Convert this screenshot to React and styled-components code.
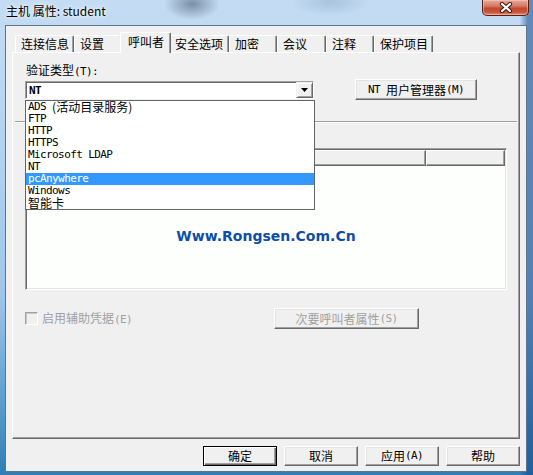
import React from "react";
import styled, { createGlobalStyle } from "styled-components";

const GlobalStyle = createGlobalStyle`
  html, body {
    margin: 0;
    padding: 0;
  }
  body {
    font-family: "Noto Sans CJK SC", sans-serif;
    font-size: 12px;
    color: #000;
  }
`;

const tabs = [
  { label: "连接信息", width: 59 },
  { label: "设置", width: 48 },
  { label: "呼叫者", width: 47, active: true },
  { label: "安全选项", width: 60 },
  { label: "加密", width: 48 },
  { label: "会议", width: 49 },
  { label: "注释", width: 48 },
  { label: "保护项目", width: 59 },
];

const options = [
  { text: "ADS ", cjk: "(活动目录服务)" },
  { text: "FTP" },
  { text: "HTTP" },
  { text: "HTTPS" },
  { text: "Microsoft LDAP" },
  { text: "NT" },
  { text: "pcAnywhere", selected: true },
  { text: "Windows" },
  { cjk: "智能卡" },
];

function App() {
  return (
    <Frame>
      <GlobalStyle />
      <TitleBar>
        <Title>主机 属性: student</Title>
        <CloseButton>
          <svg width="16" height="11" viewBox="0 0 16 11">
            <path d="M4 2 L12 9 M12 2 L4 9" stroke="#3b1a14" strokeWidth="4.2" strokeLinecap="round" />
            <path d="M4 2 L12 9 M12 2 L4 9" stroke="#fff" strokeWidth="2.2" strokeLinecap="round" />
          </svg>
        </CloseButton>
      </TitleBar>

      <Client>
        <TabStrip>
          {tabs.map((t) => (
            <Tab key={t.label} $w={t.width} $active={t.active}>
              {t.label}
            </Tab>
          ))}
        </TabStrip>

        <Panel>
          <FieldLabel>
            验证类型<Ascii>(T):</Ascii>
          </FieldLabel>

          <ComboRow>
            <Combo>
              <ComboText>
                <Ascii>NT</Ascii>
              </ComboText>
              <ArrowButton>
                <svg width="7" height="4" viewBox="0 0 7 4">
                  <polygon points="0,0 7,0 3.5,4" fill="#000" />
                </svg>
              </ArrowButton>
              <DropList>
                {options.map((o, i) => (
                  <Option key={i} $selected={o.selected}>
                    {o.text && <Ascii>{o.text}</Ascii>}
                    {o.cjk && <Cjk>{o.cjk}</Cjk>}
                  </Option>
                ))}
              </DropList>
            </Combo>
            <PushButton $w={122} $h={21}>
              <Ascii>NT </Ascii>用户管理器<Ascii>(M)</Ascii>
            </PushButton>
          </ComboRow>

          <Separator />

          <ListView>
            <ListHeader>
              <HeaderCell $w={399} />
              <HeaderCell $w={79} />
            </ListHeader>
            <ListBody>
              <Watermark>Www.Rongsen.Com.Cn</Watermark>
            </ListBody>
          </ListView>

          <CheckRow>
            <CheckLabel>
              <CheckBox />
              <span>
                启用辅助凭据<Ascii>(E)</Ascii>
              </span>
            </CheckLabel>
            <PushButton $w={145} $h={21} $disabled>
              次要呼叫者属性<Ascii>(S)</Ascii>
            </PushButton>
          </CheckRow>
        </Panel>

        <ButtonRow>
          <PushButton $w={74} $h={20} $default>确定</PushButton>
          <PushButton $w={74} $h={20}>取消</PushButton>
          <PushButton $w={74} $h={20}>
            应用<Ascii>(A)</Ascii>
          </PushButton>
          <PushButton $w={74} $h={20}>帮助</PushButton>
        </ButtonRow>
      </Client>
    </Frame>
  );
}

const Frame = styled.div`
  width: 533px;
  height: 475px;
  box-sizing: border-box;
  display: grid;
  grid-template-rows: 25px 1fr;
  overflow: hidden;
  background:
    radial-gradient(ellipse 28px 16px at 192px 4px, rgba(60, 80, 100, 0.55), rgba(60, 80, 100, 0)),
    radial-gradient(ellipse 40px 14px at 330px 2px, rgba(120, 150, 180, 0.35), rgba(120, 150, 180, 0)),
    linear-gradient(to right, rgba(20, 70, 130, 0) 97.5%, rgba(20, 70, 140, 0.55) 99%),
    linear-gradient(to bottom, #c4dcf3 0%, #b3d2ef 30%, #9fc6ea 62%, #5e9fcf 84%, #2f7db4 100%);
`;

const TitleBar = styled.div`
  display: flex;
  justify-content: space-between;
  align-items: flex-start;
  padding: 0 4px 0 6px;
`;

const Title = styled.div`
  margin-top: 3px;
  font-size: 12px;
  line-height: 16px;
  color: #000;
  text-shadow: 0 0 6px rgba(255, 255, 255, 0.9), 0 0 3px rgba(255, 255, 255, 0.9);
`;

const CloseButton = styled.div`
  width: 47px;
  height: 16px;
  box-sizing: border-box;
  display: flex;
  align-items: center;
  justify-content: center;
  border: 1px solid #5a1f14;
  border-top: none;
  border-radius: 0 0 5px 5px;
  background: linear-gradient(to bottom, #e9a899 0%, #d47a66 40%, #c04a30 55%, #c8553a 80%, #de8e6e 100%);
  box-shadow: inset 0 0 0 1px rgba(255, 220, 210, 0.45);
`;

const Client = styled.div`
  margin: 0 6px 3px 5px;
  box-sizing: border-box;
  border: 1px solid #5b7590;
  background: #f0f0f0;
  padding: 6px 6px 5px 6px;
  display: flex;
  flex-direction: column;
  min-height: 0;
`;

const TabStrip = styled.div`
  display: flex;
  align-items: flex-end;
  height: 20px;
  padding-left: 3px;
  position: relative;
  z-index: 1;
`;

const Tab = styled.div`
  box-sizing: border-box;
  width: ${(p) => (p.$active ? p.$w + 4 : p.$w)}px;
  height: ${(p) => (p.$active ? 21 : 17)}px;
  margin: ${(p) => (p.$active ? "0 -2px -1px -2px" : "0")};
  position: relative;
  z-index: ${(p) => (p.$active ? 2 : 1)};
  padding-left: ${(p) => (p.$active ? 7 : 5)}px;
  padding-top: ${(p) => (p.$active ? 1 : 0)}px;
  line-height: 16px;
  font-size: 12px;
  white-space: nowrap;
  background: #f0f0f0;
  border-top: 1px solid #fff;
  border-left: 1px solid #fff;
  border-right: 1px solid #696969;
  border-radius: 2px 2px 0 0;
  box-shadow: inset -1px 0 0 #a0a0a0;
`;

const Panel = styled.div`
  flex: 1;
  box-sizing: border-box;
  display: flex;
  flex-direction: column;
  align-items: flex-start;
  padding: 10px 0 0 12px;
  border-top: 1px solid #fff;
  border-left: 1px solid #fff;
  border-right: 1px solid #696969;
  border-bottom: 1px solid #696969;
  box-shadow: inset -1px -1px 0 #a0a0a0;
  min-height: 0;
`;

const Ascii = styled.span`
  font-family: "DejaVu Sans Mono", "Liberation Mono", monospace;
  font-size: 11px;
  letter-spacing: -0.6px;
  white-space: pre;
`;

const Cjk = styled.span`
  font-family: "Noto Sans CJK SC", sans-serif;
  font-size: 12px;
  line-height: 12px;
`;

const FieldLabel = styled.div`
  margin-left: 1px;
  line-height: 14px;
  height: 14px;
`;

const ComboRow = styled.div`
  display: flex;
  align-items: center;
  height: 21px;
  margin-top: 2px;
  gap: 41px;
`;

const Combo = styled.div`
  position: relative;
  box-sizing: border-box;
  width: 289px;
  height: 18px;
  display: flex;
  align-items: center;
  background: #fff;
  border: 1px solid;
  border-color: #a0a0a0 #fff #fff #a0a0a0;
  box-shadow: inset 1px 1px 0 #696969;
`;

const ComboText = styled.div`
  flex: 1;
  padding-left: 3px;
  line-height: 14px;
  font-weight: bold;
`;

const ArrowButton = styled.div`
  box-sizing: border-box;
  width: 17px;
  height: 16px;
  display: flex;
  align-items: center;
  justify-content: center;
  background: #f0f0f0;
  border: 1px solid;
  border-color: #f0f0f0 #696969 #696969 #f0f0f0;
  box-shadow: inset 1px 1px 0 #fff, inset -1px -1px 0 #a0a0a0;
`;

const DropList = styled.div`
  position: absolute;
  top: 18px;
  left: -1px;
  width: 290px;
  box-sizing: border-box;
  background: #fff;
  border: 1px solid #646464;
  z-index: 5;
`;

const Option = styled.div`
  height: 12px;
  display: flex;
  align-items: center;
  line-height: 12px;
  padding-left: 2px;
  white-space: nowrap;
  background: ${(p) => (p.$selected ? "#3399ff" : "transparent")};
  color: ${(p) => (p.$selected ? "#fff" : "#000")};
`;

const PushButton = styled.div`
  box-sizing: border-box;
  width: ${(p) => p.$w}px;
  height: ${(p) => p.$h}px;
  display: flex;
  align-items: center;
  justify-content: center;
  line-height: 14px;
  white-space: nowrap;
  background: #f0f0f0;
  color: ${(p) => (p.$disabled ? "#a0a0a0" : "#000")};
  border: 1px solid;
  border-color: ${(p) => (p.$default ? "#000" : "#fff #696969 #696969 #fff")};
  box-shadow: ${(p) =>
    p.$default
      ? "inset 1px 1px 0 #fff, inset -1px -1px 0 #696969, inset -2px -2px 0 #a0a0a0"
      : "inset -1px -1px 0 #a0a0a0, inset 1px 1px 0 #e3e3e3"};
`;

const Separator = styled.div`
  align-self: stretch;
  margin: 21px 2px 0 -10px;
  height: 0;
  border-top: 1px solid #a0a0a0;
  border-bottom: 1px solid #fff;
`;

const ListView = styled.div`
  margin-top: 25px;
  box-sizing: border-box;
  width: 482px;
  height: 142px;
  display: flex;
  flex-direction: column;
  background: #fdfffd;
  border: 1px solid;
  border-color: #a0a0a0 #fff #fff #a0a0a0;
  box-shadow: inset 1px 1px 0 #696969, inset -1px -1px 0 #e3e3e3;
  padding: 1px;
`;

const ListHeader = styled.div`
  display: flex;
  height: 16px;
  flex-shrink: 0;
`;

const HeaderCell = styled.div`
  box-sizing: border-box;
  width: ${(p) => p.$w}px;
  height: 16px;
  background: #f0f0f0;
  border: 1px solid;
  border-color: #fff #696969 #696969 #fff;
  box-shadow: inset -1px -1px 0 #a0a0a0;
`;

const ListBody = styled.div`
  flex: 1;
  display: flex;
  justify-content: center;
  align-items: flex-start;
  padding-top: 62px;
`;

const Watermark = styled.div`
  font-family: "DejaVu Sans", Verdana, sans-serif;
  font-weight: bold;
  font-size: 14px;
  line-height: 16px;
  color: #0d4ea6;
  background: #fff;
`;

const CheckRow = styled.div`
  display: flex;
  align-items: center;
  height: 21px;
  margin-top: 18px;
`;

const CheckLabel = styled.div`
  width: 249px;
  display: flex;
  align-items: center;
  gap: 4px;
  color: #a0a0a0;
  line-height: 14px;
`;

const CheckBox = styled.div`
  box-sizing: border-box;
  width: 13px;
  height: 13px;
  background: #f0f0f0;
  border: 1px solid;
  border-color: #a0a0a0 #fff #fff #a0a0a0;
  box-shadow: inset 1px 1px 0 #c8c8c8;
`;

const ButtonRow = styled.div`
  display: flex;
  justify-content: flex-end;
  gap: 7px;
  margin-top: 7px;
`;

export default App;
